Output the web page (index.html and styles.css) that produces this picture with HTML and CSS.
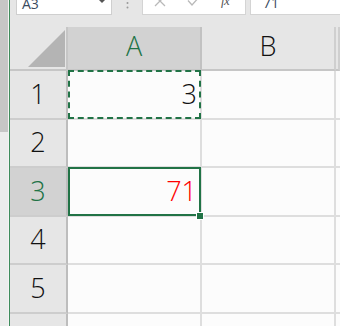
FILE: index.html
```html
<!DOCTYPE html>
<html lang="ja">
<head>
<meta charset="utf-8">
<link rel="stylesheet" href="styles.css">
</head>
<body>
<div class="app">
  <div class="side"><div class="thumb"></div></div>
  <div class="edge"></div>
  <div class="main">
    <div class="toolbar">
      <div class="namebox"><span class="ref">A3</span><span class="caret"></span></div>
      <div class="dots"><svg width="3" height="10" viewBox="0 0 3 10"><circle cx="1.5" cy="3" r="1" fill="#9a9a9a"/><circle cx="1.5" cy="7.5" r="1" fill="#9a9a9a"/></svg></div>
      <div class="fbox">
        <svg class="ico-x" width="12" height="12" viewBox="0 0 12 12"><path d="M1 1 L11 11 M11 1 L1 11" stroke="#b9b9b9" stroke-width="1.3" fill="none"/></svg>
        <svg class="ico-check" width="14" height="12" viewBox="0 0 14 12"><path d="M1 5.5 L5 10 L13 1" stroke="#b9b9b9" stroke-width="1.3" fill="none"/></svg>
        <span class="fx">fx</span>
      </div>
      <div class="fvalue"><span class="val">71</span></div>
    </div>
    <div class="sheet">
      <div class="corner"><svg width="58" height="44" viewBox="0 0 58 44"><polygon points="18,40 55,40 55,3" fill="#b4b4b4"/></svg></div>
      <div class="colhead active">A</div>
      <div class="colhead">B</div>
      <div class="colhead edgecol"></div>

      <div class="rowhead">1</div>
      <div class="cell num copied">3</div>
      <div class="cell"></div>
      <div class="cell edgecol"></div>

      <div class="rowhead">2</div>
      <div class="cell"></div>
      <div class="cell"></div>
      <div class="cell edgecol"></div>

      <div class="rowhead active">3</div>
      <div class="cell num red selected">71<span class="handle"></span></div>
      <div class="cell"></div>
      <div class="cell edgecol"></div>

      <div class="rowhead">4</div>
      <div class="cell"></div>
      <div class="cell"></div>
      <div class="cell edgecol"></div>

      <div class="rowhead">5</div>
      <div class="cell"></div>
      <div class="cell"></div>
      <div class="cell edgecol"></div>

      <div class="rowhead">6</div>
      <div class="cell"></div>
      <div class="cell"></div>
      <div class="cell edgecol"></div>
    </div>
  </div>
</div>
</body>
</html>
```
FILE: styles.css
```css
* { box-sizing: border-box; }
html, body { margin: 0; padding: 0; }
body {
  width: 340px;
  height: 326px;
  overflow: hidden;
  background: #e6e6e6;
  font-family: "Open Sans", "Noto Sans CJK JP", sans-serif;
}
.app {
  display: flex;
  height: 326px;
}
.side {
  width: 9px;
  flex-shrink: 0;
  background: #ececec;
  display: flex;
  flex-direction: column;
  border-right: 1px solid #f4f4f4;
}
.thumb {
  height: 132px;
  background: #c6c6c6;
}
.edge {
  width: 1px;
  flex-shrink: 0;
  background: #3f8c5c;
}
.main {
  flex: 1;
  display: flex;
  flex-direction: column;
  overflow: hidden;
}
.toolbar {
  height: 15px;
  flex-shrink: 0;
  margin-bottom: 12px;
  display: flex;
  align-items: stretch;
}
.namebox {
  margin-left: 6px;
  width: 96px;
  background: #fff;
  border: 1px solid #cfcfcf;
  border-top: 0;
  display: flex;
  justify-content: space-between;
  overflow: hidden;
  padding: 0 5px 0 5px;
}
.ref {
  display: block;
  font-size: 14px;
  line-height: 14px;
  margin-top: -3px;
  color: #3a4a5e;
}
.caret {
  width: 0;
  height: 0;
  border-left: 4px solid transparent;
  border-right: 4px solid transparent;
  border-top: 4px solid #555;
  margin-top: -1px;
}
.dots {
  width: 30px;
  display: flex;
  justify-content: center;
  align-items: flex-start;
}
.dots svg { display: block; }
.fbox {
  width: 104px;
  background: #fff;
  border: 1px solid #d4d4d4;
  border-top: 0;
  display: flex;
  align-items: flex-start;
  overflow: hidden;
}
.ico-x { display: block; margin: -5px 0 0 11px; }
.ico-check { display: block; margin: -5px 0 0 21px; }
.fx {
  display: block;
  margin: -6px 0 0 20px;
  font-family: "Liberation Serif", serif;
  font-style: italic;
  font-size: 13px;
  line-height: 13px;
  color: #555;
  letter-spacing: -0.5px;
}
.fvalue {
  flex: 1;
  margin-left: 4px;
  background: #fff;
  border-left: 1px solid #d4d4d4;
  border-bottom: 1px solid #d4d4d4;
  overflow: hidden;
  padding-left: 12px;
}
.val {
  display: block;
  font-size: 14px;
  line-height: 14px;
  margin-top: -4px;
  color: #3a4a5e;
}
.sheet {
  flex-shrink: 0;
  display: grid;
  grid-template-columns: 58px 134px 134px 4px;
  grid-template-rows: 44px repeat(6, 48.5px);
}
.corner {
  background: #e6e6e6;
  border-right: 2px solid #c6c6c6;
  border-bottom: 2px solid #c6c6c6;
}
.corner svg { display: block; }
.colhead {
  background: #e6e6e6;
  border-right: 2px solid #cfcfcf;
  border-bottom: 2px solid #c6c6c6;
  display: flex;
  align-items: center;
  justify-content: center;
  font-size: 27px;
  font-weight: 300;
  color: #111;
  padding-bottom: 5px;
}
.colhead.active {
  background: #d2d2d2;
  color: #217346;
  border-right-color: #c2c2c2;
}
.rowhead {
  background: #e6e6e6;
  border-right: 2px solid #bdbdbd;
  border-bottom: 2px solid #cdcdcd;
  display: flex;
  align-items: center;
  justify-content: center;
  font-size: 27px;
  font-weight: 300;
  color: #111;
  padding-bottom: 2px;
}
.rowhead.active {
  background: #d2d2d2;
  color: #217346;
}
.cell {
  background: #fcfcfc;
  border-right: 2px solid #dedede;
  border-bottom: 2px solid #dedede;
  position: relative;
  font-size: 27px;
  font-weight: 300;
  color: #111;
  display: flex;
  align-items: center;
}
.cell.edgecol { border-right: 0; }
.cell.num {
  justify-content: flex-end;
  padding-right: 3px;
  padding-bottom: 2px;
}
.cell.red { color: #ff0000; }
.cell.copied::after {
  content: "";
  position: absolute;
  top: -1px;
  left: 0;
  right: -1px;
  bottom: -1px;
  border: 2px dashed #217346;
}
.cell.selected::after {
  content: "";
  position: absolute;
  top: -1px;
  left: 0;
  right: -1px;
  bottom: -1px;
  border: 2px solid #217346;
}
.handle {
  position: absolute;
  right: -3px;
  bottom: -4px;
  width: 6px;
  height: 6px;
  background: #217346;
  outline: 1px solid #fff;
  z-index: 2;
}
```
